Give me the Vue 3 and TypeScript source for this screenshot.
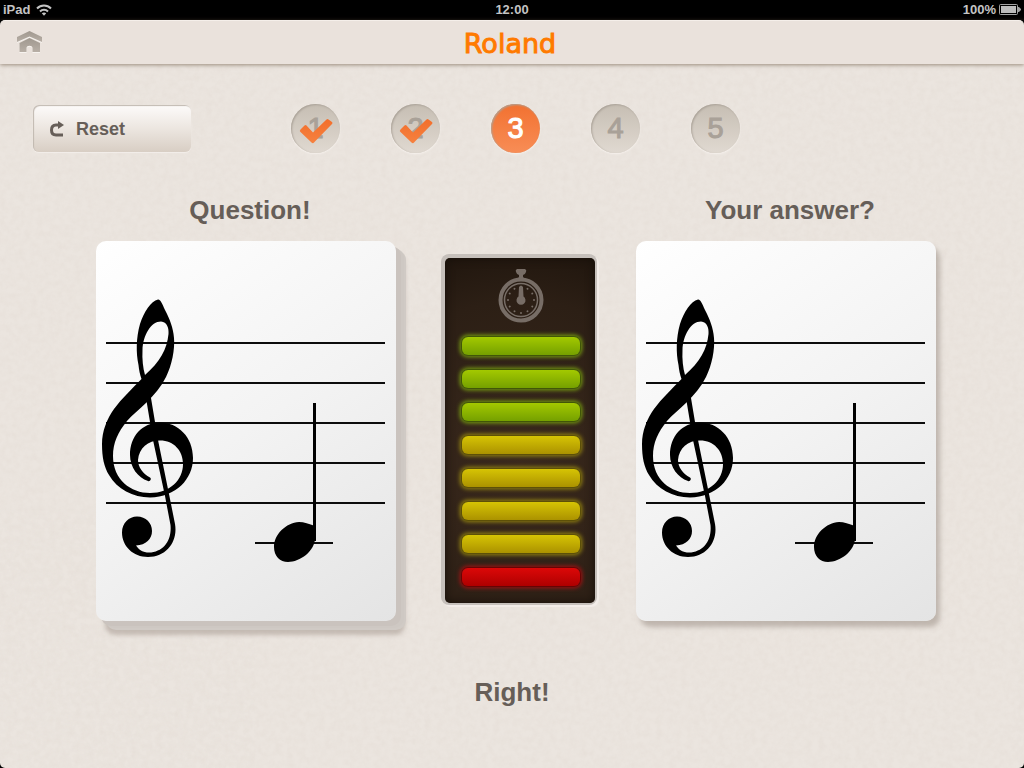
<script setup lang="ts">
import { ref, computed } from 'vue'

type StepState = 'done' | 'current' | 'todo'
interface Step {
  number: number
  state: StepState
}

const total = 5
const current = ref(3)

const steps = computed<Step[]>(() =>
  Array.from({ length: total }, (_, i) => {
    const number = i + 1
    const state: StepState =
      number < current.value ? 'done' : number === current.value ? 'current' : 'todo'
    return { number, state }
  })
)

const lamps: string[] = ['green', 'green', 'green', 'yellow', 'yellow', 'yellow', 'yellow', 'red']
const ticks: number[] = [30, 60, 90, 120, 150, 180, 210, 240, 270, 300, 330]

function reset(): void {
  current.value = 1
}
</script>

<template>
  <div class="app">
    <svg class="defs" aria-hidden="true">
      <defs>
        <filter id="grain" x="0" y="0" width="100%" height="100%">
          <feTurbulence type="fractalNoise" baseFrequency="0.16" numOctaves="3" seed="5" />
          <feColorMatrix
            type="matrix"
            values="0 0 0 0 0.66  0 0 0 0 0.58  0 0 0 0 0.52  0.8 0.6 0 0 -0.5"
          />
        </filter>
        <linearGradient id="homeFill" x1="0" y1="0" x2="0" y2="1">
          <stop offset="0" stop-color="#a0988f" />
          <stop offset="1" stop-color="#b8afa6" />
        </linearGradient>
        <linearGradient id="checkFill" x1="0" y1="0" x2="0" y2="1">
          <stop offset="0" stop-color="#f26f2c" />
          <stop offset="1" stop-color="#f6813f" />
        </linearGradient>
        <symbol id="score" viewBox="0 0 300 380">
          <path
            d="M10 102H289M10 142H289M10 182H289M10 222H289M10 262H289M159 302H237"
            stroke="#0c0c0c"
            stroke-width="2"
          />
          <path d="M217 162h3v138h-3z" />
          <path
            d="M219 285C213 283 208 281 203 281C190 282 178 293 178 306C178 315 184 321 192 321C204 321 219 310 219 297Z"
          />
          <path
            fill-rule="evenodd"
            d="M62 58.500C55 60 48 71 44 83C40 97 40 112 42.500 124C43 129 44 134 45.500 138
              C36 148 26 157 18 168C11 178 6 190 6 203C6 216 8 226 13 234C21 248 37 256.500 54 256.500
              C80 256 97 238 97 217C97 196 82 181.500 64 181.500C46 182 34 195 34 214
              C34 226 42 237 52 240C54 241 56 238 54 236.500C47 233 42 226 42 219
              C43 207 52 199.500 64 199.500C78 199.500 87 210 87 223C87 239 74 252 54 252
              C35 252 17 239 17 215C17 202 22 191 31 180C36 174 44 168 50.500 161.500
              C58 154 65 146 70 136C76 124 79 108 78 97C77 86 74 79 69 69C66 62 64 58 62 58.500Z
              M49 134C47 127 46 118 46.500 109C47 94 55 80.500 65 80.500C71 81 73 87 72.500 93
              C71 108 64 121 49 134Z"
          />
          <path
            d="M50 157L55 157L62 199L74 258L79 283C82 300 71 316 52 316C37 316 26 305 26 291.500
              C26 282 33 275.500 41 275.500C50 275.500 56 282 56 290C56 298 50 304 40 304.500
              C43 309 47 311.500 53 311.500C67 311 76 300 74.500 284L69 255L57 199Z"
          />
        </symbol>
      </defs>
    </svg>

    <svg class="paper" aria-hidden="true">
      <rect width="100%" height="100%" filter="url(#grain)" />
    </svg>

    <div class="status">
      <div class="status-left">
        <span>iPad</span>
        <svg width="16" height="12" viewBox="0 0 16 12" aria-label="Wi-Fi" role="img">
          <g fill="none" stroke="#c4c4c4" stroke-width="2">
            <path d="M1 4.500C5 0.500 11 0.500 15 4.500" />
            <path d="M4 7.500C6.200 5.200 9.800 5.200 12 7.500" />
          </g>
          <path d="M5.800 9.300C7 8.200 9 8.200 10.200 9.300L8 11.700Z" fill="#c4c4c4" />
        </svg>
      </div>
      <span>12:00</span>
      <div class="status-right">
        <span>100%</span>
        <svg width="22" height="12" viewBox="0 0 22 12" aria-label="Battery" role="img">
          <rect x="0.500" y="0.500" width="18" height="10" rx="1" fill="none" stroke="#a2a2a2" />
          <rect x="2" y="2" width="15" height="7" fill="#bcbcbc" />
          <path d="M19 3h1l2 2v1l-2 2h-1z" fill="#a2a2a2" />
        </svg>
      </div>
    </div>

    <header class="bar">
      <a class="home" href="#" aria-label="Home">
        <svg width="26" height="24" viewBox="0 0 26 24">
          <g fill="#f7f3ef" transform="translate(0 1)">
            <path d="M13.500 1L26 7V12L13.500 6.500L1 12V7Z" />
            <path d="M13.500 8L24 13V22H16.500V18C16.500 15 10.500 15 10.500 18V22H3.500V13Z" />
          </g>
          <g fill="url(#homeFill)">
            <path d="M13.500 1L26 7V12L13.500 6.500L1 12V7Z" />
            <path d="M13.500 8L24 13V22H16.500V18C16.500 15 10.500 15 10.500 18V22H3.500V13Z" />
          </g>
        </svg>
      </a>
      <div class="brand">Roland</div>
      <span></span>
    </header>

    <main>
      <div class="toolbar">
        <button class="reset" type="button" @click="reset">
          <svg width="16" height="16" viewBox="0 0 16 16" aria-hidden="true">
            <path
              d="M10 4H7C4 4 2.500 6 2.500 9S4 14 7 14H14"
              fill="none"
              stroke="#665e58"
              stroke-width="3"
            />
            <path d="M9 0L15 4L9 8Z" fill="#665e58" />
          </svg>
          <span>Reset</span>
        </button>
        <ol class="steps">
          <li v-for="step in steps" :key="step.number" class="step" :class="step.state">
            <span>{{ step.number }}</span>
            <svg
              v-if="step.state === 'done'"
              class="check"
              width="34"
              height="26"
              viewBox="0 0 34 26"
              role="img"
              aria-label="Answered"
            >
              <path
                d="M1.500 11.500L5.500 7.500Q6.500 6.500 7.500 7.500L14 14.500L27.500 1.500Q28.500 0.500 29.500 1.500L33 4Q34 5 33 6L15 24.500Q14 26 12.500 24.500L1.500 14Q0 13 1.500 11.500Z"
                fill="url(#checkFill)"
              />
            </svg>
          </li>
        </ol>
      </div>

      <div class="board">
        <h2 class="q-title">Question!</h2>
        <h2 class="a-title">Your answer?</h2>
        <div class="card stack">
          <svg role="img" aria-label="Treble staff, middle C"><use href="#score" /></svg>
        </div>
        <div class="timer">
          <svg class="watch" width="46" height="54" viewBox="0 0 46 54" aria-hidden="true">
            <g fill="none" stroke="#776d66">
              <circle cx="23" cy="31" r="20.500" stroke-width="4" />
              <circle cx="23" cy="31" r="16.500" stroke-width="1.500" />
            </g>
            <g fill="#776d66">
              <path
                d="M19 0H27Q29 1 28 3Q27 6 25 6V8L27 10H19L21 8V6Q19 6 18 3Q17 1 19 0Z"
              />
              <path d="M21 18Q23 15 25 18L25.500 27.500A4.500 4.500 0 1 1 20.500 27.500Z" />
              <circle
                v-for="deg in ticks"
                :key="deg"
                cx="23"
                cy="18"
                r="1"
                :transform="`rotate(${deg} 23 31)`"
              />
            </g>
          </svg>
          <div class="lamps">
            <i v-for="(lamp, i) in lamps" :key="i" class="lamp" :class="lamp"></i>
          </div>
        </div>
        <div class="card answer">
          <svg role="img" aria-label="Treble staff, middle C"><use href="#score" /></svg>
        </div>
      </div>

      <p class="result" role="status">Right!</p>
    </main>
  </div>
</template>

<style>
body {
  margin: 0;
  background: #000;
}
</style>

<style scoped>
.app {
  position: relative;
  box-sizing: border-box;
  min-height: 100vh;
  display: flex;
  flex-direction: column;
  overflow: hidden;
  border-radius: 0 0 5px 5px;
  background: #ebe5df;
  color: #665e58;
  font-family: 'Liberation Sans', Arial, sans-serif;
  font-weight: 700;
}
.defs {
  position: absolute;
  width: 0;
  height: 0;
}
.paper {
  position: absolute;
  inset: 0;
  width: 100%;
  height: 100%;
  opacity: 0.25;
}
.status {
  position: relative;
  display: grid;
  grid-template-columns: 1fr auto 1fr;
  align-items: center;
  height: 20px;
  padding: 0 3px;
  background: #000;
  color: #c4c4c4;
  font-size: 13px;
  line-height: 20px;
}
.status-left,
.status-right {
  display: flex;
  align-items: center;
  gap: 6px;
}
.status-right {
  justify-content: flex-end;
  gap: 3px;
}
.bar {
  position: relative;
  display: grid;
  grid-template-columns: 1fr auto 1fr;
  align-items: center;
  height: 44px;
  padding: 0 20px 0 16px;
  background: #000;
  box-shadow: 0 1px 4px rgba(110, 90, 70, 0.65);
}
.bar::before {
  content: '';
  position: absolute;
  inset: 0;
  box-sizing: border-box;
  border-top: 1px solid #f5efea;
  border-radius: 5px 5px 0 0;
  background: #eae2dc;
}
.home,
.brand {
  position: relative;
}
.home {
  display: flex;
  justify-self: start;
}
.brand {
  padding-top: 3px;
  color: #ff7a00;
  font-family: 'DejaVu Sans', sans-serif;
  font-weight: 400;
  font-size: 27px;
  line-height: 41px;
  -webkit-text-stroke: 1px #ff7a00;
}
main {
  position: relative;
  flex: 1;
  padding-top: 40px;
}
.toolbar {
  display: grid;
  grid-template-columns: 1fr auto 1fr;
  align-items: center;
  padding: 0 26px 0 33px;
}
.reset {
  display: flex;
  align-items: center;
  gap: 11px;
  width: 158px;
  height: 47px;
  padding: 0 16px;
  border: 0;
  border-radius: 6px;
  background: linear-gradient(#fdfbfa, #ece6e0 50%, #d8cec4);
  box-shadow: inset 1px 1px 1px #c0b8b0, 0 1px 1px #f3eeea;
  color: #665e58;
  font: 700 18px/24px 'Liberation Sans', Arial, sans-serif;
}
.steps {
  display: flex;
  gap: 51px;
  margin: 0;
  padding: 0;
  list-style: none;
}
.step {
  position: relative;
  width: 49px;
  height: 49px;
  border-radius: 50%;
  background: linear-gradient(#c6beb3, #e0d9d1);
  box-shadow: inset 1px 1px 2px #aaa298, 0 1px 2px #f7f2ee;
  color: #a9a198;
  font-size: 29px;
  font-weight: 400;
  line-height: 49px;
  text-align: center;
  -webkit-text-stroke: 1px currentColor;
}
.step.current {
  background: linear-gradient(#f27130, #f88d56);
  color: #fff;
}
.check {
  position: absolute;
  left: 8px;
  top: 14px;
}
.board {
  display: grid;
  grid-template-columns: 300px 158px 300px;
  justify-content: center;
  column-gap: 41px;
  row-gap: 15px;
  padding: 41px 24px 0 32px;
}
h2 {
  margin: 0;
  padding-left: 8px;
  font-size: 26px;
  line-height: 32px;
  text-align: center;
}
.q-title {
  grid-column: 1;
}
.a-title {
  grid-column: 3;
}
.card {
  height: 380px;
  border-radius: 10px;
  background: linear-gradient(145deg, #fff, #f3f3f3 50%, #e4e4e4);
}
.card svg {
  display: block;
  width: 100%;
  height: 100%;
}
.stack {
  box-shadow: 5px 5px 0 #cac3be, 8px 7px 0 #cec8c3, 10px 9px 0 #d0cac5,
    9px 14px 4px rgba(165, 153, 144, 0.55);
}
.answer {
  box-shadow: 4px 6px 5px rgba(150, 138, 128, 0.5);
}
.timer {
  box-sizing: border-box;
  justify-self: end;
  width: 150px;
  height: 345px;
  margin-top: 17px;
  padding: 11px 15px 17px 17px;
  border-radius: 5px;
  background: radial-gradient(circle at 50% 60%, #3a291d, #2c1f15 75%, #20160e);
  box-shadow: inset 0 0 10px #160f09, -1px -1px 0 3px #c6c0bb, 1px 1px 0 3px #f2ece8;
  display: flex;
  flex-direction: column;
  justify-content: space-between;
  align-items: center;
}
.lamps {
  display: flex;
  flex-direction: column;
  gap: 15px;
  width: 100%;
}
.lamp {
  height: 18px;
  border-radius: 6px;
}
.green {
  background: linear-gradient(#a3c900, #75a000);
  box-shadow: 0 0 1px 1px #3d5208, 0 0 4px 2px #7fa812;
}
.yellow {
  background: linear-gradient(#d6c404, #ab9200);
  box-shadow: 0 0 1px 1px #594d08, 0 0 4px 2px #9a8a12;
}
.red {
  background: linear-gradient(#dc0808, #ae0000);
  box-shadow: 0 0 1px 1px #620404, 0 0 4px 2px #a81414;
}
.result {
  margin: 55px 0 0;
  font-size: 26px;
  line-height: 32px;
  text-align: center;
}
</style>
